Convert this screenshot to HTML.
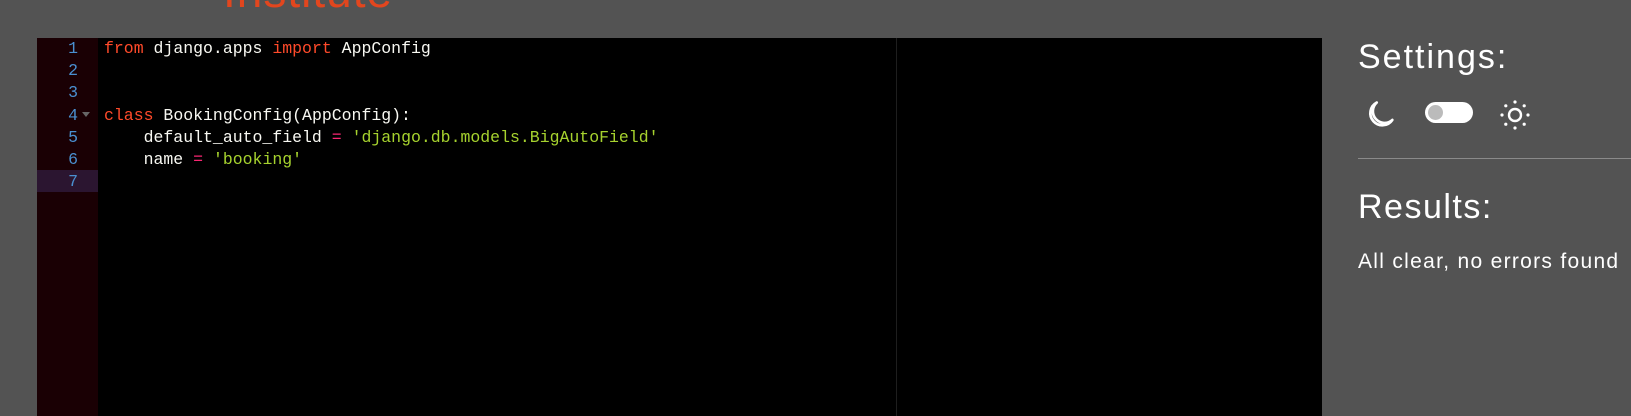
<!DOCTYPE html>
<html><head><meta charset="utf-8"><style>
html,body{margin:0;padding:0;width:1631px;height:416px;overflow:hidden;background:#535353;}
.inst{position:absolute;left:223px;top:-36px;font:300 46px "Liberation Sans",sans-serif;color:#e2461e;letter-spacing:1px;}
.ed{position:absolute;left:37px;top:38px;width:1285px;height:378px;background:#000;}
.gut{position:absolute;left:0;top:0;width:61px;height:100%;background:#1a0004;}
.hl{position:absolute;left:0;top:132px;width:61px;height:22px;background:#2b1530;}
.pm{position:absolute;left:859px;top:0;width:1px;height:100%;background:#1e1e1e;}
.ln{position:absolute;left:0;width:41px;text-align:right;color:#4a8fd0;font:16.5px/22.2px "Liberation Mono",monospace;}
.code{position:absolute;left:67px;top:0;font:16.5px/22.2px "Liberation Mono",monospace;color:#f8f8f2;white-space:pre;}
.k{color:#ff4a2a}.s{color:#a6d22e}.o{color:#f92672}
.fold{position:absolute;left:45px;top:74px;width:0;height:0;border-left:4px solid transparent;border-right:4px solid transparent;border-top:5px solid #666;}
.side{position:absolute;left:1358px;color:#fff;font-family:"Liberation Sans",sans-serif;}
</style></head><body>
<div class="inst">Institute</div>
<div class="ed">
<div class="gut"></div><div class="hl"></div><div class="pm"></div>
<div class="ln" style="top:0">1</div><div class="ln" style="top:22.2px">2</div><div class="ln" style="top:44.4px">3</div><div class="ln" style="top:66.6px">4</div><div class="ln" style="top:88.8px">5</div><div class="ln" style="top:111px">6</div><div class="ln" style="top:133.2px">7</div>
<div class="fold"></div>
<div class="code"><span class="k">from</span> django.apps <span class="k">import</span> AppConfig


<span class="k">class</span> BookingConfig(AppConfig):
    default_auto_field <span class="o">=</span> <span class="s">'django.db.models.BigAutoField'</span>
    name <span class="o">=</span> <span class="s">'booking'</span>
</div>
</div>
<div class="side" style="top:38px;font-size:34px;letter-spacing:2px;">Settings:</div>
<svg style="position:absolute;left:1364px;top:98px" width="34" height="34" viewBox="0 0 24 24"><path d="M20 15.5A8.5 8.5 0 1 1 9 3.2 7 7 0 0 0 20 15.5z" fill="none" stroke="#fff" stroke-width="1.9" stroke-linejoin="round"/></svg>
<div style="position:absolute;left:1425px;top:102px;width:48px;height:21px;border-radius:11px;background:#fff;"></div>
<div style="position:absolute;left:1428px;top:105px;width:15px;height:15px;border-radius:50%;background:#bbb;"></div>
<svg style="position:absolute;left:1499px;top:99px" width="32" height="32" viewBox="0 0 32 32"><circle cx="16" cy="16" r="6" fill="none" stroke="#fff" stroke-width="2.4"/><g fill="#fff"><circle cx="16" cy="3" r="1.6"/><circle cx="16" cy="29" r="1.6"/><circle cx="3" cy="16" r="1.6"/><circle cx="29" cy="16" r="1.6"/><circle cx="6.8" cy="6.8" r="1.6"/><circle cx="25.2" cy="6.8" r="1.6"/><circle cx="6.8" cy="25.2" r="1.6"/><circle cx="25.2" cy="25.2" r="1.6"/></g></svg>
<div style="position:absolute;left:1358px;top:158px;width:273px;height:1px;background:#8a8a8a;"></div>
<div class="side" style="top:188px;font-size:34px;letter-spacing:1.5px;">Results:</div>
<div class="side" style="top:250px;font-size:21px;letter-spacing:1.3px;">All clear, no errors found</div>
</body></html>
